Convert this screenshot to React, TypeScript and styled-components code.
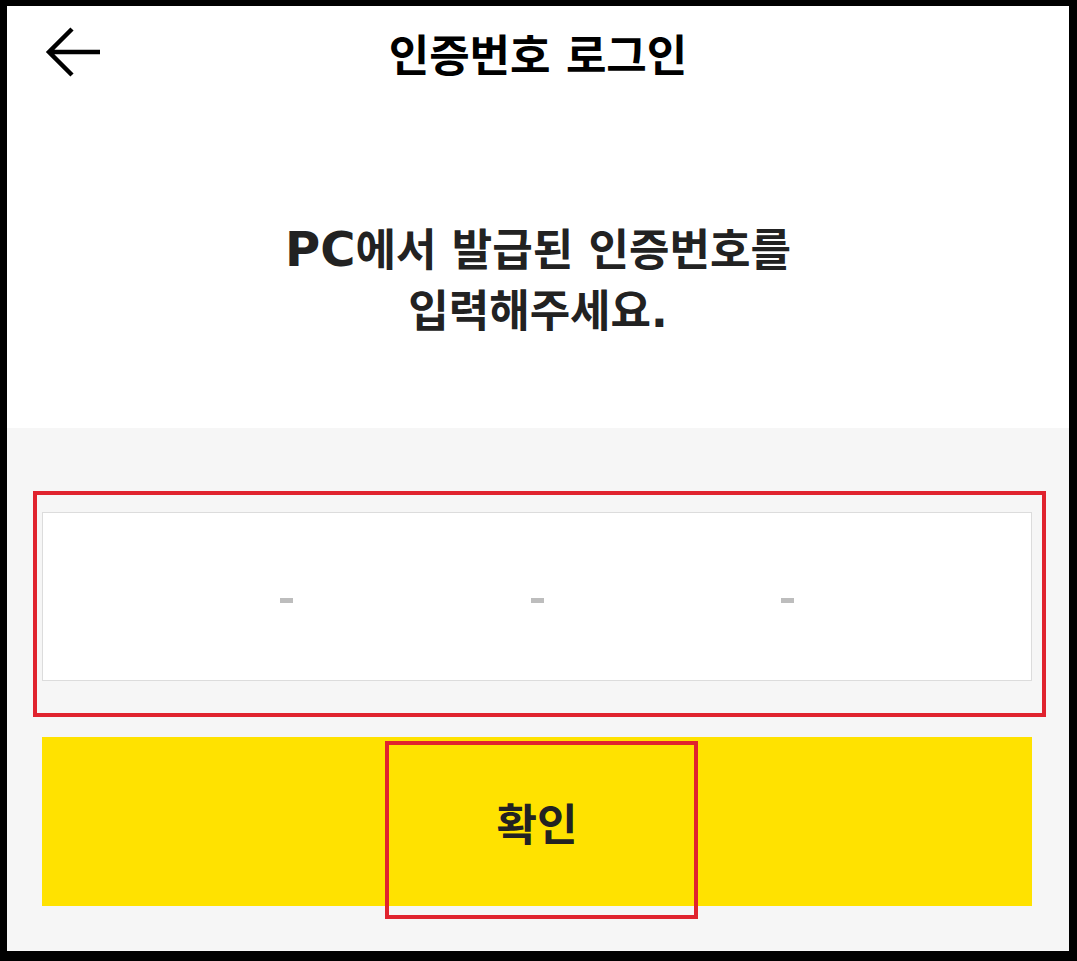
import styled, { createGlobalStyle } from 'styled-components';

const GlobalStyle = createGlobalStyle`
  html, body {
    margin: 0;
    padding: 0;
    background: #000;
  }
  body {
    font-family: "DejaVu Sans", "Noto Sans CJK KR", sans-serif;
  }
`;

const Frame = styled.div`
  padding: 6px 8px 10px 7px;
  width: 1077px;
  height: 961px;
  box-sizing: border-box;
`;

const Screen = styled.div`
  width: 1062px;
  height: 945px;
  background: #fff;
  display: flex;
  flex-direction: column;
`;

const Header = styled.header`
  height: 94px;
  flex-shrink: 0;
  display: grid;
  grid-template-columns: 1fr auto 1fr;
  align-items: center;
  padding: 0 33px;
`;

const BackButton = styled.button`
  justify-self: start;
  background: none;
  border: 0;
  padding: 0;
  display: flex;
  cursor: pointer;
`;

const Title = styled.h1`
  margin: 0;
  font-size: 44px;
  font-weight: 700;
  color: #000;
`;

const Intro = styled.section`
  height: 328px;
  flex-shrink: 0;
  box-sizing: border-box;
  padding-top: 120px;
  text-align: center;
`;

const Message = styled.p`
  margin: 0;
  font-size: 44px;
  line-height: 61px;
  font-weight: 700;
  color: #222;
`;

const Latin = styled.span`
  font-size: 48px;
  line-height: 1;
`;

const Panel = styled.section`
  flex: 1;
  background: #f6f6f6;
  padding: 84px 37px 0 35px;
  display: flex;
  flex-direction: column;
  gap: 56px;
`;

const Annotated = styled.div`
  position: relative;
`;

const Highlight = styled.div<{ $top: number; $right: number; $bottom: number; $left: number }>`
  position: absolute;
  top: ${(p) => p.$top}px;
  right: ${(p) => p.$right}px;
  bottom: ${(p) => p.$bottom}px;
  left: ${(p) => p.$left}px;
  border: 4px solid #e0232e;
  pointer-events: none;
`;

const CodeField = styled.div`
  height: 169px;
  box-sizing: border-box;
  background: #fff;
  border: 1px solid #dcdcdc;
  display: grid;
  grid-template-columns: 1fr 13px 1fr 13px 1fr 13px 1fr;
  align-items: center;
`;

const Segment = styled.input`
  border: 0;
  outline: none;
  background: transparent;
  width: 100%;
  height: 100%;
  text-align: center;
  font-size: 40px;
  font-family: inherit;
`;

const Dash = styled.span`
  display: block;
  height: 5px;
  margin-top: 7px;
  background: #bdbdbd;
`;

const ConfirmButton = styled.button`
  height: 169px;
  width: 100%;
  border: 0;
  background: #ffe200;
  color: #222;
  font-family: inherit;
  font-size: 44px;
  font-weight: 700;
  cursor: pointer;
`;

function ArrowBack(): JSX.Element {
  return (
    <svg width="60" height="54" viewBox="0 0 60 54" fill="none">
      <path
        d="M32 3 L9 26 L32 49 M9 26 H68"
        stroke="#000"
        strokeWidth="4.5"
        strokeLinecap="butt"
        strokeLinejoin="miter"
      />
    </svg>
  );
}

function App(): JSX.Element {
  return (
    <Frame>
      <GlobalStyle />
      <Screen>
        <Header>
          <BackButton aria-label="뒤로">
            <ArrowBack />
          </BackButton>
          <Title>인증번호 로그인</Title>
          <span />
        </Header>
        <Intro>
          <Message>
            <Latin>PC</Latin>에서 발급된 인증번호를
            <br />
            입력해주세요.
          </Message>
        </Intro>
        <Panel>
          <Annotated>
            <CodeField>
              <Segment />
              <Dash />
              <Segment />
              <Dash />
              <Segment />
              <Dash />
              <Segment />
            </CodeField>
            <Highlight $top={-21} $right={-14} $bottom={-36} $left={-9} />
          </Annotated>
          <Annotated>
            <ConfirmButton>확인</ConfirmButton>
            <Highlight $top={4} $right={334} $bottom={-13} $left={343} />
          </Annotated>
        </Panel>
      </Screen>
    </Frame>
  );
}

export default App;
